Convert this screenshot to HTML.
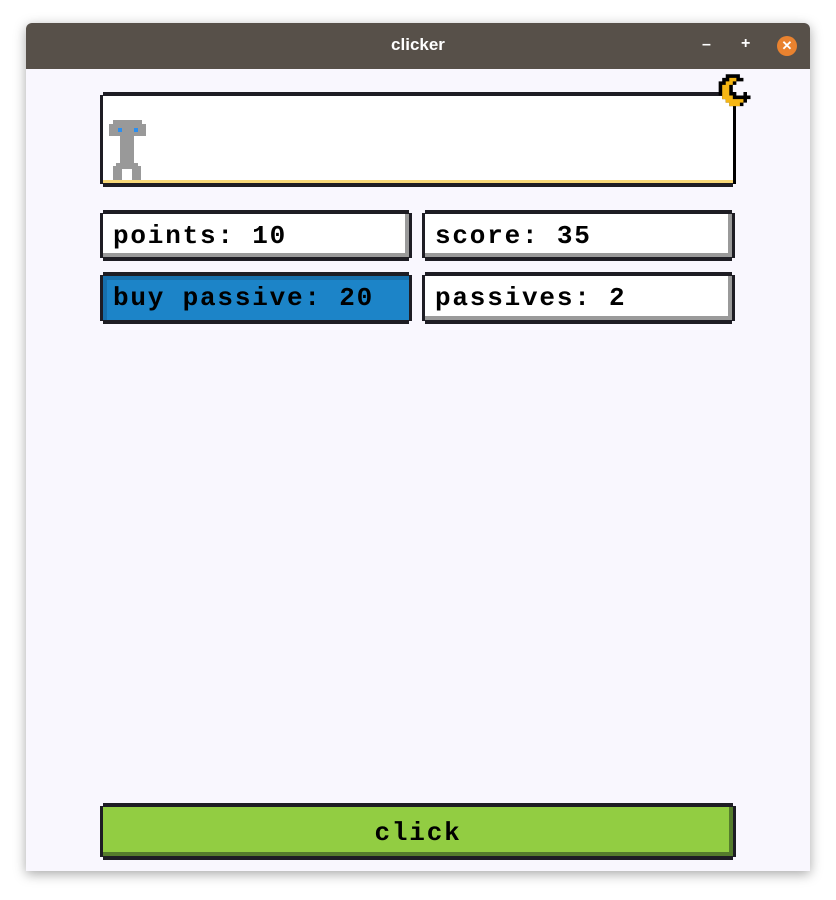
<!DOCTYPE html>
<html><head><style>
body{margin:0;width:836px;height:900px;background:#fff;position:relative;overflow:hidden;font-family:"Liberation Mono",monospace}
.win{position:absolute;left:26px;top:23px;width:784px;height:848px;background:#f9f7fe;box-shadow:0 3px 12px rgba(0,0,0,.35);border-radius:6px 6px 0 0;overflow:hidden}
.tb{position:absolute;left:0;top:0;width:784px;height:46px;background:#575049}
.title{position:absolute;left:0;width:784px;top:12px;text-align:center;color:#fff;font:bold 17px "Liberation Sans",sans-serif}
.b{position:absolute;color:#fff;font:bold 16px "Liberation Sans",sans-serif}
.x{position:absolute;left:751px;top:13px;width:20px;height:20px;border-radius:50%;background:#e9822f;color:#fff;font:bold 13px "Liberation Sans";text-align:center;line-height:20px}
.box{position:absolute}
.box .f{position:absolute;left:3px;right:3px;top:0;bottom:0;border-top:4px solid #1e1d24;border-bottom:4px solid #1e1d24;box-sizing:border-box}
.box .l,.box .r{position:absolute;width:3px;top:3px;bottom:3px;background:#1e1d24}
.box .l{left:0}.box .r{right:0}
.t{position:absolute;left:13px;top:14px;font-size:26px;font-weight:bold;letter-spacing:1.8px;color:#000;line-height:24px}
</style></head><body>
<div class="win">
<div class="tb"><div class="title">clicker</div><div class="b" style="left:676px;top:13px">–</div><div class="b" style="left:715px;top:12px">+</div><div class="x">✕</div></div>
</div>

<div class="box" style="left:100px;top:92px;width:636px;height:95px">
 <div class="f" style="background:#fff;box-shadow:inset 0 -3px 0 #f8d878"></div><div class="l"></div><div class="r" style="top:14px;background:#000"></div>
</div>
<svg style="position:absolute;left:0;top:0" width="836" height="900">
 <g fill="#999">
  <rect x="113" y="120" width="29" height="16"/><rect x="109" y="124" width="37" height="12"/>
  <rect x="120" y="136" width="14" height="28"/><rect x="116" y="163" width="22" height="6"/>
  <rect x="113" y="166" width="9" height="14"/><rect x="132" y="166" width="9" height="14"/>
 </g>
 <rect x="118" y="128" width="4" height="4" fill="#2a8ef0"/><rect x="134" y="128" width="4" height="4" fill="#2a8ef0"/>
 <g transform="translate(734 92) scale(1.18) translate(-734 -93)">
 <path d="M730 78h9v3h3v3h-6v3h-3v6h3v3h6v-3h3v3h3v3h-3v3h-3v3h-12v-3h-3v-3h-3v-3h-3v-12h3v-3h3v-3h3z" fill="#000"/>
 <path d="M733 81h3v3h-3v3h-3v9h3v3h9v3h-3v3h-9v-3h-3v-3h-3v-12h3v-3h3v-3h3z" fill="#f5b614"/>
 </g>
</svg>

<div class="box" style="left:100px;top:210px;width:312px;height:51px">
 <div class="f" style="background:#fff;box-shadow:inset -4px -4px 0 #9a9a9a"></div><div class="l"></div><div class="r"></div>
 <div class="t">points: 10</div></div>
<div class="box" style="left:422px;top:210px;width:313px;height:51px">
 <div class="f" style="background:#fff;box-shadow:inset -4px -4px 0 #9a9a9a"></div><div class="l"></div><div class="r"></div>
 <div class="t">score: 35</div></div>
<div class="box" style="left:100px;top:272px;width:312px;height:52px">
 <div class="f" style="background:#1c84c8;box-shadow:inset 4px 4px 0 #1770ac"></div><div class="l"></div><div class="r"></div>
 <div class="t">buy passive: 20</div></div>
<div class="box" style="left:422px;top:272px;width:313px;height:52px">
 <div class="f" style="background:#fff;box-shadow:inset -4px -4px 0 #9a9a9a"></div><div class="l"></div><div class="r"></div>
 <div class="t">passives: 2</div></div>

<div class="box" style="left:100px;top:803px;width:636px;height:57px">
 <div class="f" style="background:#92cd42;box-shadow:inset -4px -4px 0 #557c2c"></div><div class="l"></div><div class="r"></div>
 <div class="t" style="left:0;right:0;text-align:center;top:18px">click</div></div>
</body></html>
